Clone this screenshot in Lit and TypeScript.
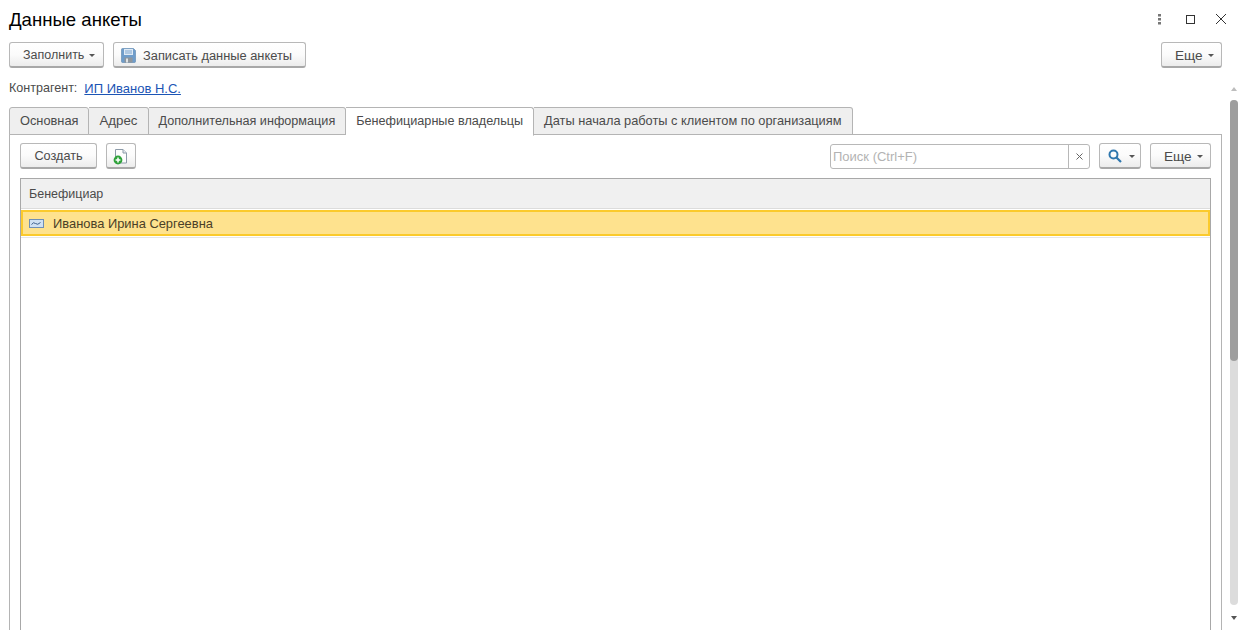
import { LitElement, html, css } from "lit";
import { customElement } from "lit/decorators.js";

const caret = html`<span class="caret"></span>`;

@customElement("app-root")
export class AppRoot extends LitElement {
  static styles = css`
    :host { display: block; width: 1238px; height: 639px; overflow: hidden; background: #fff; position: relative;
      font-family: "Liberation Sans", Arial, sans-serif; font-size: 12.5px; color: #4b4b4b; }
    * { box-sizing: border-box; }
    .head { display: flex; align-items: center; height: 42px; padding: 0 0 2px 9px; }
    .title { font-size: 18.6px; color: #000; flex: 1; }
    .win svg { display: block; }
    .bar { display: flex; gap: 9px; padding: 0 16px 0 9px; height: 26px; }
    .spacer { flex: 1; }
    .btn { height: 26px; display: flex; align-items: center; padding-top: 1px; border: 1px solid #b8b8b8; border-bottom: 2px solid #a8a8a8; border-radius: 3px;
      background: linear-gradient(#ffffff 0%, #fbfbfb 50%, #ececec 100%); color: #4b4b4b; white-space: nowrap; }
    .caret { display: inline-block; width: 0; height: 0; border: 3px solid transparent; border-top: 3px solid #555; border-bottom: 0; margin-top: 1px; }
    .fill { width: 95px; padding-left: 13px; gap: 5px; }
    .save { width: 193px; padding-left: 7px; gap: 7px; font-size: 12.85px; }
    .more { width: 61px; padding-left: 13px; gap: 5px; font-size: 13.6px; }
    .contra { display: flex; align-items: center; height: 20px; margin-top: 10px; padding-left: 9px; gap: 7px; font-size: 12.55px; }
    .contra a { color: #1c55b5; text-decoration: underline; font-size: 13px; }
    .tabs { display: flex; margin: 9px 0 0 9px; height: 28px; align-items: flex-start; position: relative; z-index: 1; font-size: 12.65px; }
    .tab { height: 28px; padding: 0 10px 1px; display: flex; align-items: center; background: #efefef; border: 1px solid #b4b4b4; border-left-width: 0; white-space: nowrap; color: #4b4b4b; border-top-right-radius: 3px; }
    .tab:first-child { border-left-width: 1px; border-top-left-radius: 3px; font-size: 12.8px; }
    .tab.wide { font-size: 13.3px; }
    .tab.long { font-size: 12.8px; }
    .tab.on { background: #fff; border-bottom-color: #fff; height: 29px; padding-bottom: 2px; }
    .panel { margin: -1px 16px 0 9px; height: 496px; border: 1px solid #b4b4b4; border-bottom: 0; padding: 8px 10px 0 10px; display: flex; flex-direction: column; }
    .tools { display: flex; height: 26px; gap: 9px; align-items: flex-start; }
    .create { width: 77px; justify-content: center; font-size: 12.7px; }
    .add { width: 30px; justify-content: center; }
    .search { width: 260px; height: 25px; margin-top: 1px; border: 1px solid #b8b8b8; border-radius: 3px; display: flex; }
    .search .inp { flex: 1; padding-left: 2px; color: #b3b3b3; line-height: 23px; font-size: 13px; }
    .search .x { width: 21px; border-left: 1px solid #b8b8b8; display: flex; align-items: center; justify-content: center; }
    .find { width: 42px; padding-left: 8px; gap: 7px; }
    .grid { margin-top: 9px; flex: 1; border: 1px solid #a8a8a8; border-bottom: 0; }
    .ghead { height: 30px; background: #f0f0f0; display: flex; align-items: center; padding-left: 8px; border-bottom: 1px solid #dcdcdc; }
    .row { margin-top: 1px; height: 28px; border-bottom: 1px solid #e6e6e6; }
    .rowin { height: 26px; background: #fee28e; border: 2px solid #fbca2c; display: flex; align-items: center; padding: 1px 0 0 5px; gap: 8px; color: #4a3f28; font-size: 12.9px; }
    .sb { position: absolute; right: 0; top: 100px; bottom: 34px; width: 8px; border-radius: 4px; background: #dcdcdc; }
    .thumb { height: 261px; width: 8px; border-radius: 4px; background: #9e9e9e; }
    .up, .down { position: absolute; right: 1px; width: 0; height: 0; border: 3px solid transparent; }
    .up { top: 87px; border-top: 0; border-bottom: 4px solid #bdbdbd; }
    .down { top: 616px; border-bottom: 0; border-top: 4px solid #555; }
  `;

  render() {
    return html`
      <div class="head">
        <div class="title">Данные анкеты</div>
        <div class="win">
          <svg width="88" height="20" viewBox="0 0 88 20">
            <g fill="#777"><rect x="8" y="4" width="3" height="2.5"/><rect x="8" y="8" width="3" height="2.5"/><rect x="8" y="12" width="3" height="2.5"/></g>
            <rect x="36.5" y="5.5" width="8" height="8" fill="none" stroke="#333" stroke-width="1"/>
            <path d="M66 4 L76 14 M76 4 L66 14" stroke="#333" fill="none"/>
          </svg>
        </div>
      </div>
      <div class="bar">
        <div class="btn fill">Заполнить ${caret}</div>
        <div class="btn save">
          <svg width="15" height="15" viewBox="0 0 15 15">
            <path d="M0.5 1.5 a1 1 0 0 1 1-1 h11 l2 2 v11 a1 1 0 0 1-1 1 h-12 a1 1 0 0 1-1-1z" fill="#6f9dcb" stroke="#5b84ad" stroke-width=".6"/>
            <rect x="3" y="1" width="9" height="6" fill="#dfeaf5"/>
            <path d="M4 3h7M4 5h7" stroke="#7ea6cf" />
            <rect x="3.5" y="9.5" width="8" height="5" fill="#8f969c"/>
            <rect x="5" y="10.5" width="2" height="4" fill="#dfe3e6"/>
          </svg>
          Записать данные анкеты
        </div>
        <div class="spacer"></div>
        <div class="btn more">Еще ${caret}</div>
      </div>
      <div class="contra"><span>Контрагент:</span><a>ИП Иванов Н.С.</a></div>
      <div class="tabs">
        <div class="tab">Основная</div>
        <div class="tab wide">Адрес</div>
        <div class="tab">Дополнительная информация</div>
        <div class="tab on">Бенефициарные владельцы</div>
        <div class="tab long">Даты начала работы с клиентом по организациям</div>
      </div>
      <div class="panel">
        <div class="tools">
          <div class="btn create">Создать</div>
          <div class="btn add">
            <svg width="16" height="18" viewBox="0 0 16 18">
              <path d="M2.5 2.5 h7.5 l3.5 3.5 v10 h-11z" fill="#fdfdfd" stroke="#8c9aa8"/>
              <path d="M10 2.5 v3.5 h3.5" fill="#e6ebf0" stroke="#8c9aa8"/>
              <circle cx="5" cy="13" r="4.4" fill="#2fa23a"/>
              <path d="M2.6 13h4.8M5 10.6v4.8" stroke="#fff" stroke-width="1.5"/>
            </svg>
          </div>
          <div class="spacer"></div>
          <div class="search"><div class="inp">Поиск (Ctrl+F)</div><div class="x">
            <svg width="7" height="7" viewBox="0 0 7 7"><path d="M.5 .5l6 6M6.5 .5l-6 6" stroke="#666"/></svg>
          </div></div>
          <div class="btn find">
            <svg width="14" height="14" viewBox="0 0 14 14"><circle cx="5.5" cy="5.5" r="4" fill="none" stroke="#2f77ae" stroke-width="2"/><path d="M8.5 8.5l4.5 4.5" stroke="#2f77ae" stroke-width="2.2"/></svg>
            ${caret}
          </div>
          <div class="btn more">Еще ${caret}</div>
        </div>
        <div class="grid">
          <div class="ghead">Бенефициар</div>
          <div class="row"><div class="rowin">
            <svg width="16" height="9" viewBox="0 0 16 9" style="margin-left:1px">
              <rect x=".5" y=".5" width="14" height="8" fill="#cfe0f2" stroke="#6f8fb5"/>
              <path d="M2.5 5.5 q2-3 4-1 t5-1" fill="none" stroke="#3d5f8c"/>
            </svg>
            Иванова Ирина Сергеевна
          </div></div>
        </div>
      </div>
      <div class="up"></div>
      <div class="sb"><div class="thumb"></div></div>
      <div class="down"></div>
    `;
  }
}
